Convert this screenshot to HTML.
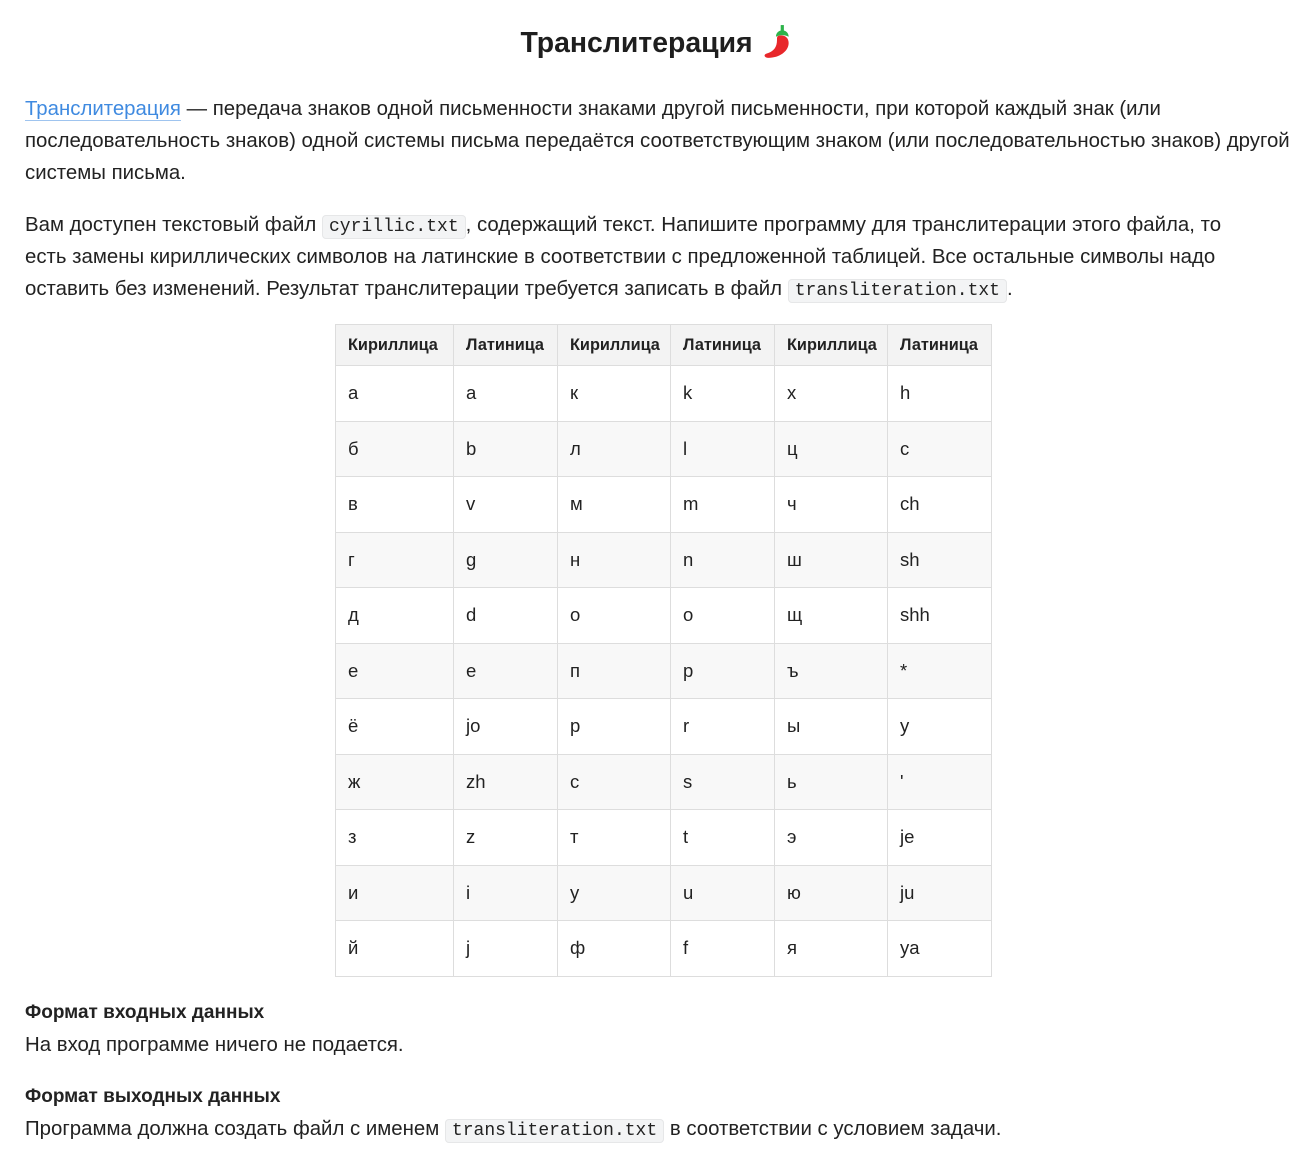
<!DOCTYPE html>
<html><head><meta charset="utf-8"><style>
body{margin:0;background:#fff;color:#222;font-family:"Liberation Sans","DejaVu Sans",sans-serif;font-size:20.4px;}
.w{position:relative;width:1313px;height:1158px;}
h1{position:absolute;left:0;width:1313px;top:23px;margin:0;text-align:center;font-size:28.4px;font-weight:bold;line-height:40px;color:#1e1e1e}
.l{position:absolute;left:25px;white-space:nowrap;line-height:32px;}
a{color:#3f8ae0;text-decoration:none;border-bottom:1px solid #9fc4ef}
code{font-family:"Liberation Mono",monospace;font-size:18px;background:#f3f4f5;border:1px solid #e6e7e8;border-radius:4px;padding:1px 6px;}
table{position:absolute;left:335px;top:324px;border-collapse:collapse;font-size:18.5px;table-layout:fixed;width:657px}
td,th{border:1px solid #ddd;padding:0 0 0 12px;text-align:left;height:54.5px;}
th{background:#f3f3f3;height:40px;font-weight:bold;font-size:16.3px}
tr:nth-child(odd) td{background:#f8f8f8}
</style></head><body><div class="w">
<h1>Транслитерация <svg width="32" height="36" viewBox="0 0 30 34" style="vertical-align:-8px"><path d="M17 11c4-1 9 1 9 7 0 8-9 14-19 14-4 0-5-3-2-4 7-2 10-6 10-13 0-2 0-4 2-4z" fill="#e8272b"/><path d="M14 12c0-4 3-6 6-6s6 2 6 6c-2-1-4-1.5-6-1.5s-4 .5-6 1.5z" fill="#2db34a"/><rect x="18.5" y="1" width="3" height="6" fill="#2db34a"/></svg></h1>
<div class="l" style="top:93px"><a>Транслитерация</a> — передача знаков одной письменности знаками другой письменности, при которой каждый знак (или</div>
<div class="l" style="top:125px">последовательность знаков) одной системы письма передаётся соответствующим знаком (или последовательностью знаков) другой</div>
<div class="l" style="top:157px">системы письма.</div>
<div class="l" style="top:209px">Вам доступен текстовый файл <code>cyrillic.txt</code>, содержащий текст. Напишите программу для транслитерации этого файла, то</div>
<div class="l" style="top:241px">есть замены кириллических символов на латинские в соответствии с предложенной таблицей. Все остальные символы надо</div>
<div class="l" style="top:273px">оставить без изменений. Результат транслитерации требуется записать в файл <code>transliteration.txt</code>.</div>
<table>
<colgroup><col style="width:118px"><col style="width:104px"><col style="width:113px"><col style="width:104px"><col style="width:113px"><col style="width:104px"></colgroup>
<tr><th>Кириллица</th><th>Латиница</th><th>Кириллица</th><th>Латиница</th><th>Кириллица</th><th>Латиница</th></tr>
<tr><td>а</td><td>a</td><td>к</td><td>k</td><td>х</td><td>h</td></tr>
<tr><td>б</td><td>b</td><td>л</td><td>l</td><td>ц</td><td>c</td></tr>
<tr><td>в</td><td>v</td><td>м</td><td>m</td><td>ч</td><td>ch</td></tr>
<tr><td>г</td><td>g</td><td>н</td><td>n</td><td>ш</td><td>sh</td></tr>
<tr><td>д</td><td>d</td><td>о</td><td>o</td><td>щ</td><td>shh</td></tr>
<tr><td>е</td><td>e</td><td>п</td><td>p</td><td>ъ</td><td>*</td></tr>
<tr><td>ё</td><td>jo</td><td>р</td><td>r</td><td>ы</td><td>y</td></tr>
<tr><td>ж</td><td>zh</td><td>с</td><td>s</td><td>ь</td><td>'</td></tr>
<tr><td>з</td><td>z</td><td>т</td><td>t</td><td>э</td><td>je</td></tr>
<tr><td>и</td><td>i</td><td>у</td><td>u</td><td>ю</td><td>ju</td></tr>
<tr><td>й</td><td>j</td><td>ф</td><td>f</td><td>я</td><td>ya</td></tr>
</table>
<div class="l" style="top:997px;font-weight:bold;font-size:19px">Формат входных данных</div>
<div class="l" style="top:1029px">На вход программе ничего не подается.</div>
<div class="l" style="top:1081px;font-weight:bold;font-size:19px">Формат выходных данных</div>
<div class="l" style="top:1113px">Программа должна создать файл с именем <code>transliteration.txt</code> в соответствии с условием задачи.</div>
</div></body></html>
